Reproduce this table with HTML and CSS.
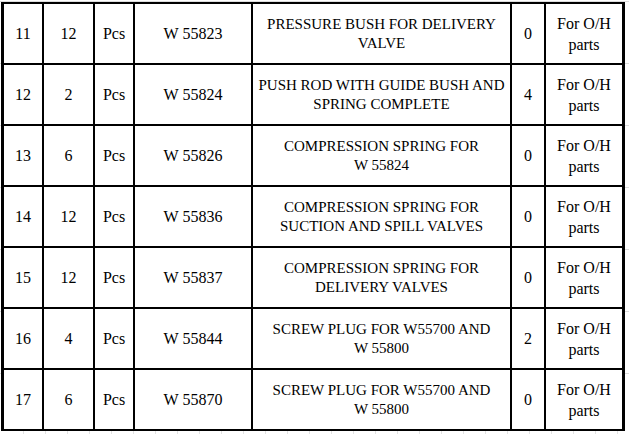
FILE: index.html
```html
<!DOCTYPE html>
<html>
<head>
<meta charset="utf-8">
<link rel="stylesheet" href="styles.css">
</head>
<body>
<div class="sheet">
  <div class="grid">
    <div class="cell">11</div><div class="cell">12</div><div class="cell">Pcs</div><div class="cell">W 55823</div>
    <div class="cell desc">PRESSURE BUSH FOR DELIVERY<br>VALVE</div><div class="cell">0</div><div class="cell rem">For O/H<br>parts</div>

    <div class="cell">12</div><div class="cell">2</div><div class="cell">Pcs</div><div class="cell">W 55824</div>
    <div class="cell desc">PUSH ROD WITH GUIDE BUSH AND<br>SPRING COMPLETE</div><div class="cell">4</div><div class="cell rem">For O/H<br>parts</div>

    <div class="cell">13</div><div class="cell">6</div><div class="cell">Pcs</div><div class="cell">W 55826</div>
    <div class="cell desc">COMPRESSION SPRING FOR<br>W 55824</div><div class="cell">0</div><div class="cell rem">For O/H<br>parts</div>

    <div class="cell">14</div><div class="cell">12</div><div class="cell">Pcs</div><div class="cell">W 55836</div>
    <div class="cell desc">COMPRESSION SPRING FOR<br>SUCTION AND SPILL VALVES</div><div class="cell">0</div><div class="cell rem">For O/H<br>parts</div>

    <div class="cell">15</div><div class="cell">12</div><div class="cell">Pcs</div><div class="cell">W 55837</div>
    <div class="cell desc">COMPRESSION SPRING FOR<br>DELIVERY VALVES</div><div class="cell">0</div><div class="cell rem">For O/H<br>parts</div>

    <div class="cell">16</div><div class="cell">4</div><div class="cell">Pcs</div><div class="cell">W 55844</div>
    <div class="cell desc">SCREW PLUG FOR W55700 AND<br>W 55800</div><div class="cell">2</div><div class="cell rem">For O/H<br>parts</div>

    <div class="cell">17</div><div class="cell">6</div><div class="cell">Pcs</div><div class="cell">W 55870</div>
    <div class="cell desc">SCREW PLUG FOR W55700 AND<br>W 55800</div><div class="cell">0</div><div class="cell rem">For O/H<br>parts</div>
  </div>
  <div class="ticks"></div>
</div>
</body>
</html>
```

FILE: styles.css
```css
html, body {
  margin: 0;
  padding: 0;
}
body {
  width: 629px;
  height: 434px;
  overflow: hidden;
  background-color: #fff;
  background-image: repeating-linear-gradient(to bottom, transparent 0 61px, #dcdcdc 61px 62px);
  background-position: 0 2px;
  font-family: "Liberation Serif", serif;
  color: #000;
}
.sheet {
  padding: 2px 0 0 1px;
}
.grid {
  display: grid;
  grid-template-columns: 40px 51px 40px 118px 259px 34px 79px;
  grid-auto-rows: 61px;
  width: fit-content;
  border-top: 2px solid #000;
  border-left: 3px solid #000;
  background: #fff;
}
.cell {
  border-right: 2px solid #000;
  border-bottom: 2px solid #000;
  display: flex;
  align-items: center;
  justify-content: center;
  text-align: center;
  font-family: "Liberation Serif", serif;
  font-size: 16px;
  line-height: 19px;
  white-space: nowrap;
}
.cell:nth-child(7n) {
  border-right-width: 3px;
}
.desc {
  font-size: 15px;
  line-height: 19px;
}
.rem {
  line-height: 21px;
}
.ticks {
  height: 4px;
  background-image: repeating-linear-gradient(to right, transparent 0 21px, #e2e2e2 21px 22px);
  background-position: 1px 0;
}
```
